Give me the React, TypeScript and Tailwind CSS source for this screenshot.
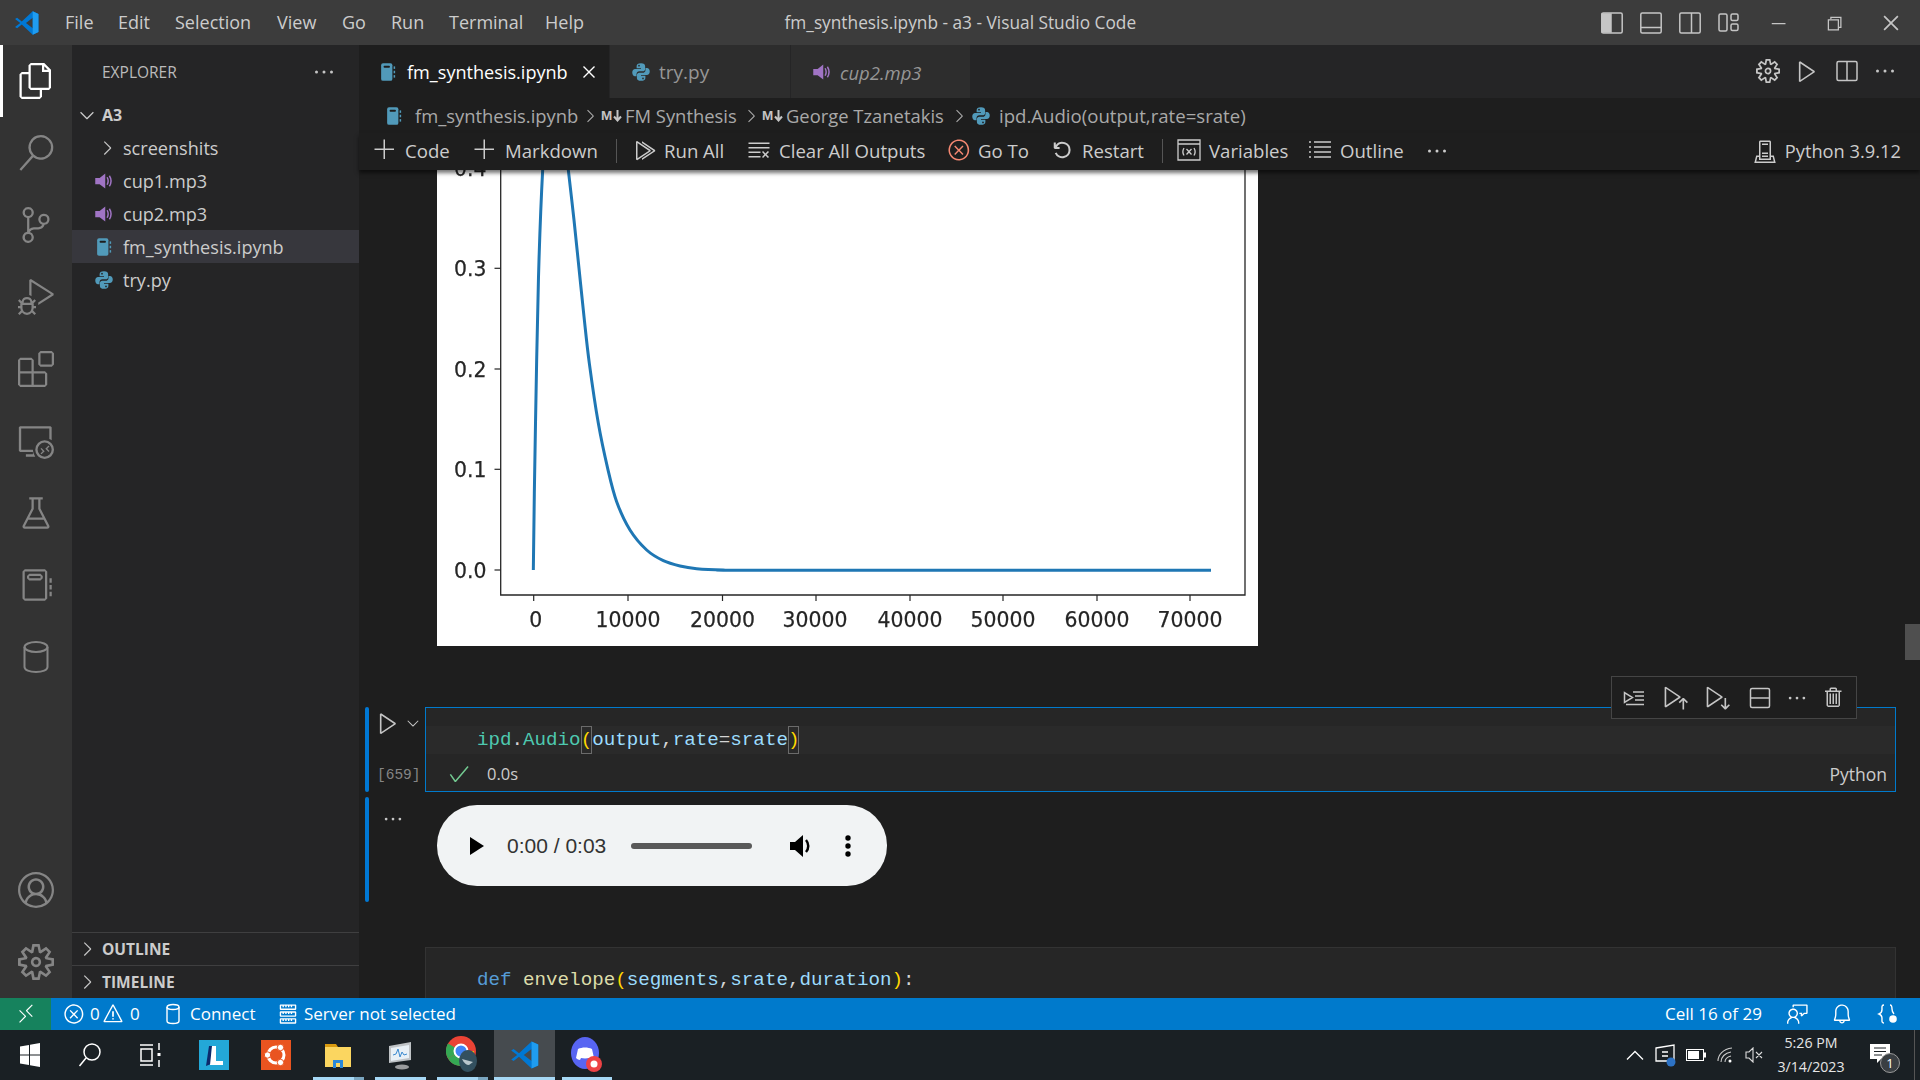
import React from "react";
import {
  VscFiles, VscSearch, VscSourceControl, VscDebugAlt, VscExtensions, VscRemoteExplorer, VscBeaker, VscNotebook,
  VscAccount, VscSettingsGear, VscChevronDown, VscChevronRight, VscClose, VscEllipsis, VscAdd, VscRunAll, VscClearAll,
  VscError, VscDebugRestart, VscPlay, VscCheck, VscRunAbove, VscRunBelow, VscTrash, VscWarning,
  VscRemote, VscFeedback, VscBell, VscServer, VscServerEnvironment, VscChromeMinimize, VscChromeRestore, VscChromeClose,
} from "react-icons/vsc";

const NotebookFile = ({ s = 20 }: { s?: number }) => (
  <svg width={s} height={s} viewBox="0 0 16 16" fill="#519aba" className="shrink-0">
    <rect x="2.5" y="1" width="9" height="14" rx="1.5" />
    <rect x="4.5" y="3" width="5" height="1.6" rx=".6" fill="#1e1e1e" />
    <rect x="12.5" y="3.5" width="1.2" height="2" />
    <rect x="12.5" y="7" width="1.2" height="2" />
    <rect x="12.5" y="10.5" width="1.2" height="2" />
  </svg>
);
const PyFile = ({ s = 20, c = "#519aba" }: { s?: number; c?: string }) => (
  <svg width={s} height={s} viewBox="0 0 16 16" fill={c} className="shrink-0">
    <path d="M8 1c-2.5 0-3.5 1-3.5 2.3V5H8v.6H3.3C2 5.6 1 6.7 1 8.4c0 1.8 1 2.9 2.2 2.9h1.2V9.700c0-1.300 1-2.300 2.300-2.300h2.700c1 0 1.900-.9 1.900-1.900V3.300C11.300 2 10.300 1 8 1zM6.400 2.200a.7.7 0 1 1 0 1.400.7.7 0 0 1 0-1.400z" />
    <path d="M8 15c2.500 0 3.500-1 3.500-2.300V11H8v-.6h4.700c1.300 0 2.300-1.100 2.300-2.800 0-1.800-1-2.900-2.200-2.900h-1.200v1.600c0 1.300-1 2.300-2.300 2.300H6.600c-1 0-1.900.9-1.900 1.900v2.200C4.700 14 5.700 15 8 15zm1.600-1.200a.7.7 0 1 1 0-1.400.7.7 0 0 1 0 1.400z" />
  </svg>
);
const AudioFile = ({ s = 20 }: { s?: number }) => (
  <svg width={s} height={s} viewBox="0 0 16 16" fill="#a074c4" className="shrink-0">
    <path d="M1 5.500h3.500L9 2v12L4.500 10.500H1z" />
    <path d="M10.500 5c1 1.800 1 4.200 0 6M12.300 3.800c1.600 2.500 1.600 5.900 0 8.400" fill="none" stroke="#a074c4" strokeWidth="1.200" />
  </svg>
);
const LayoutIcon = ({ kind }: { kind: "left" | "bottom" | "right" | "grid" }) => (
  <svg width="22" height="22" viewBox="0 0 22 22" fill="none" stroke="#c5c5c5" strokeWidth="1.500">
    {kind === "grid" ? (
      <>
        <rect x="1" y="2" width="8" height="17" rx="1.500" />
        <rect x="13" y="2" width="7" height="6.500" rx="1.500" />
        <rect x="13" y="12" width="7" height="6.500" rx="1.500" />
      </>
    ) : (
      <>
        <rect x=".8" y="1" width="20.400" height="20" rx="1.500" />
        {kind === "left" && <path d="M1 2h9v18H1z" fill="#c5c5c5" />}
        {kind === "bottom" && <path d="M1 15.500h20" />}
        {kind === "right" && <path d="M12.500 1v20" />}
      </>
    )}
  </svg>
);
const MD = () => (
  <span className="flex items-center w-[24px] shrink-0">
    <span className="text-[13.500px] font-bold text-[#c5c5c5] font-['Liberation_Sans',sans-serif] leading-none">M</span>
    <svg width="9" height="12" viewBox="0 0 9 12" fill="none" stroke="#c5c5c5" strokeWidth="2" className="ml-[1px] shrink-0">
      <path d="M4.500 0v10M1 6.500l3.500 4 3.500-4" />
    </svg>
  </span>
);

function smooth(p: [number, number][]) {
  let d = `M${p[0][0]} ${p[0][1]}`;
  for (let i = 0; i < p.length - 1; i++) {
    const a = p[Math.max(0, i - 1)], b = p[i], c = p[i + 1], e = p[Math.min(p.length - 1, i + 2)];
    const c1x = b[0] + (c[0] - a[0]) / 6, c1y = b[1] + (c[1] - a[1]) / 6;
    const c2x = c[0] - (e[0] - b[0]) / 6, c2y = c[1] - (e[1] - b[1]) / 6;
    d += `C${c1x} ${c1y} ${c2x} ${c2y} ${c[0]} ${c[1]}`;
  }
  return d;
}

function Chart() {
  const asc: [number, number][] = [[310, 1230], [313, 1000], [320, 600], [327, 300], [338, 30], [346, -60]];
  const desc: [number, number][] = [
    [405, -60], [415, 30], [432, 180], [447, 325], [462, 470], [478, 610], [505, 790], [533, 925], [560, 1025], [600, 1110], [650, 1170], [700, 1202],
    [750, 1218], [800, 1226], [880, 1230], [1000, 1231], [2343, 1231],
  ];
  const conv = (p: [number, number][]) => p.map(([x, y]) => [x / 3 - 7, y / 3 - 10] as [number, number]);
  const yt: [string, number][] = [["0.0", 400], ["0.1", 299.3], ["0.2", 199], ["0.3", 98.3], ["0.4", -2]];
  const xt: [string, number][] = [["0", 96.7], ["10000", 191], ["20000", 285.5], ["30000", 379], ["40000", 473], ["50000", 566], ["60000", 660], ["70000", 753]];
  return (
    <svg width="821" height="476" viewBox="0 0 821 476" className="block bg-white blur-[0.35px] shrink-0">
      <g fontFamily="'DejaVu Sans', sans-serif" fontSize="20.400" fill="#262626" stroke="#262626" strokeWidth="0.25">
        {yt.map(([t, y]) => (
          <g key={t}>
            <path d={`M57.500 ${y}H63.700`} strokeWidth="1.200" />
            <text x="17" y={y + 8}>{t}</text>
          </g>
        ))}
        {xt.map(([t, x]) => (
          <g key={t}>
            <path d={`M${x} 425V431`} strokeWidth="1.200" />
            <text x={t === "0" ? x + 2 : t === "30000" ? x - 1 : x} y="456.500" textAnchor="middle">{t}</text>
          </g>
        ))}
      </g>
      <path d="M63.700 -10V425H808V-10" fill="none" stroke="#262626" strokeWidth="1.300" />
      <path d={smooth(conv(asc))} fill="none" stroke="#1f77b4" strokeWidth="3" />
      <path d={smooth(conv(desc))} fill="none" stroke="#1f77b4" strokeWidth="3" />
    </svg>
  );
}

const Menu = ({ t, w }: { t: string; w: string }) => <span className={`${w} text-[#cccccc]`}>{t}</span>;

function TitleBar() {
  return (
    <div className="h-[45px] shrink-0 bg-[#3c3c3c] grid grid-cols-[1fr_auto_1fr] items-center text-[18px]">
      <div className="flex items-center">
        <svg width="26" height="26" viewBox="0 0 100 100" className="ml-[14px] mr-[25px] shrink-0">
          <path d="M72 5 30 44 12 30 4 35l20 15L4 65l8 5 18-14 42 39 22-10V15zM72 30v40L46 50z" fill="#0078d4" />
          <path d="M72 5l22 10v70L72 95z" fill="#1f9cf0" />
        </svg>
        <Menu t="File" w="w-[53px]" />
        <Menu t="Edit" w="w-[57px]" />
        <Menu t="Selection" w="w-[102px]" />
        <Menu t="View" w="w-[65px]" />
        <Menu t="Go" w="w-[49px]" />
        <Menu t="Run" w="w-[58px]" />
        <Menu t="Terminal" w="w-[96px]" />
        <Menu t="Help" w="w-[40px]" />
      </div>
      <div className="text-[#cccccc] text-[17.300px] w-[351px] text-center whitespace-nowrap">fm_synthesis.ipynb - a3 - Visual Studio Code</div>
      <div className="flex items-center justify-end">
        <div className="flex items-center gap-[17px] mr-[10px]">
          <LayoutIcon kind="left" />
          <LayoutIcon kind="bottom" />
          <LayoutIcon kind="right" />
          <LayoutIcon kind="grid" />
        </div>
        <div className="flex items-center text-[#c5c5c5]">
          <div className="w-[56px] flex justify-center"><VscChromeMinimize size={20} /></div>
          <div className="w-[56px] flex justify-center"><VscChromeRestore size={20} /></div>
          <div className="w-[58px] flex justify-center"><VscChromeClose size={22} /></div>
        </div>
      </div>
    </div>
  );
}

function ActivityBar() {
  const top = [VscSearch, VscSourceControl, VscDebugAlt, VscExtensions, VscRemoteExplorer, VscBeaker, VscNotebook];
  return (
    <div className="w-[72px] shrink-0 bg-[#333333] flex flex-col text-[#858585]">
      <div className="relative h-[72px] flex items-center justify-center text-white">
        <div className="absolute left-0 top-0 bottom-0 w-[3px] bg-white" />
        <VscFiles size={36} />
      </div>
      {top.map((I, i) => (
        <div key={i} className="h-[72px] flex items-center justify-center"><I size={36} /></div>
      ))}
      <div className="h-[72px] flex items-center justify-center">
        <svg width="36" height="36" viewBox="0 0 36 36" fill="none" stroke="#858585" strokeWidth="2">
          <ellipse cx="18" cy="8" rx="11.500" ry="5" />
          <path d="M6.500 8v20c0 3 5 5 11.500 5s11.500-2 11.500-5V8" />
        </svg>
      </div>
      <div className="mt-auto h-[72px] flex items-center justify-center"><VscAccount size={36} /></div>
      <div className="h-[72px] flex items-center justify-center"><VscSettingsGear size={36} /></div>
    </div>
  );
}

const Row = ({ icon, t, active }: { icon: React.ReactNode; t: string; active?: boolean }) => (
  <div className={`h-[33px] flex items-center text-[#cccccc] text-[18.100px] ${active ? "bg-[#37373d]" : ""}`}>
    <div className="w-[51px] flex justify-end pr-[9px]">{icon}</div>
    <span className="pt-[2px]">{t}</span>
  </div>
);

function Sidebar() {
  return (
    <div className="w-[287px] shrink-0 bg-[#252526] flex flex-col">
      <div className="h-[53px] flex items-center justify-between pl-[30px] pr-[23px] text-[#bbbbbb] text-[15.500px]">
        <span className="pt-[2px]">EXPLORER</span>
        <VscEllipsis size={24} className="text-[#c5c5c5]" />
      </div>
      <div className="h-[33px] flex items-center text-[#cccccc] font-bold text-[16px]">
        <VscChevronDown size={22} className="ml-[4px] mr-[4px]" />
        <span>A3</span>
      </div>
      <Row icon={<VscChevronRight size={22} className="text-[#c5c5c5] -mr-[4px]" />} t="screenshits" />
      <Row icon={<AudioFile />} t="cup1.mp3" />
      <Row icon={<AudioFile />} t="cup2.mp3" />
      <Row icon={<NotebookFile />} t="fm_synthesis.ipynb" active />
      <Row icon={<PyFile />} t="try.py" />
      <div className="mt-auto">
        {["OUTLINE", "TIMELINE"].map((t) => (
          <div key={t} className="h-[33px] border-t border-[#3f3f40] flex items-center text-[#cccccc] font-bold text-[15.500px]">
            <VscChevronRight size={22} className="ml-[4px] mr-[4px] text-[#c5c5c5]" />
            <span className="pt-[1px]">{t}</span>
          </div>
        ))}
      </div>
    </div>
  );
}

function Tabs() {
  return (
    <div className="h-[53px] shrink-0 bg-[#252526] flex items-stretch">
      <div className="w-[251px] bg-[#1e1e1e] flex items-center pl-[19px] text-white text-[18.100px] border-r border-[#252526]">
        <NotebookFile />
        <span className="ml-[9px] w-[171px] pt-[2px]">fm_synthesis.ipynb</span>
        <VscClose size={22} />
      </div>
      <div className="w-[181px] bg-[#2d2d2d] flex items-center pl-[21px] text-[#969696] text-[19px] border-r border-[#252526]">
        <PyFile />
        <span className="ml-[8px] pt-[2px]">try.py</span>
      </div>
      <div className="w-[179px] bg-[#2d2d2d] flex items-center pl-[21px] text-[#969696] text-[18.500px] italic">
        <AudioFile />
        <span className="ml-[8px] pt-[2px]">cup2.mp3</span>
      </div>
      <div className="flex-1 flex items-center justify-end pr-[23px] pb-[2px] text-[#c5c5c5]">
        <VscSettingsGear size={24} />
        <VscPlay size={26} className="ml-[14px]" />
        <svg width="22" height="22" viewBox="0 0 22 22" fill="none" stroke="#c5c5c5" strokeWidth="1.500" className="ml-[16px]">
          <rect x="1" y="1.500" width="20" height="19" rx="1.500" />
          <path d="M11 1.500v19" />
        </svg>
        <VscEllipsis size={24} className="ml-[15px]" />
      </div>
    </div>
  );
}

function Breadcrumb() {
  const chev = <VscChevronRight size={20} className="text-[#a9a9a9] mx-[1px] shrink-0" />;
  return (
    <div className="h-[35px] shrink-0 bg-[#1e1e1e] flex items-center pl-[25px] text-[#a9a9a9] text-[18.400px] whitespace-nowrap">
      <NotebookFile />
      <span className="ml-[11px] w-[164px]">fm_synthesis.ipynb</span>
      {chev}
      <MD />
      <span className="w-[115px]">FM Synthesis</span>
      {chev}
      <MD />
      <span className="w-[162px]">George Tzanetakis</span>
      {chev}
      <span className="ml-[1px]"><PyFile /></span>
      <span className="ml-[8px] text-[18.600px]">ipd.Audio(output,rate=srate)</span>
    </div>
  );
}

const Tool = ({ icon, t, w, ml, gap = "ml-[8px]" }: { icon: React.ReactNode; t: string; w: string; ml: string; gap?: string }) => (
  <div className={`flex items-center shrink-0 ${ml}`}>
    <div className="w-[24px] flex justify-center">{icon}</div>
    <span className={`${w} ${gap} whitespace-nowrap`}>{t}</span>
  </div>
);

function Toolbar() {
  return (
    <div className="h-[37px] shrink-0 bg-[#1e1e1e] flex items-center pl-[14px] pb-[2px] text-[#cccccc] text-[18.600px] shadow-[0_3px_4px_rgba(0,0,0,0.55)] relative z-10">
      <Tool ml="" w="w-[46px]" t="Code" icon={<VscAdd size={24} />} />
      <Tool ml="ml-[22px]" w="w-[92px]" t="Markdown" icon={<VscAdd size={24} />} />
      <div className="w-px h-[24px] bg-[#555] ml-[19px]" />
      <Tool ml="ml-[16px]" gap="ml-[7px]" w="w-[62px]" t="Run All" icon={<VscRunAll size={24} />} />
      <Tool ml="ml-[21px]" w="w-[148px]" t="Clear All Outputs" icon={<VscClearAll size={24} />} />
      <Tool ml="ml-[20px]" gap="ml-[7px]" w="w-[52px]" t="Go To" icon={<VscError size={24} className="text-[#f48771]" />} />
      <Tool ml="ml-[20px]" w="w-[62px]" t="Restart" icon={<VscDebugRestart size={22} />} />
      <div className="w-px h-[24px] bg-[#555] ml-[18px]" />
      <Tool ml="ml-[14px]" w="w-[78px]" t="Variables" icon={
        <svg width="24" height="24" viewBox="0 0 24 24" fill="none" stroke="#cccccc" strokeWidth="1.300">
          <path d="M1 2h22v20H1zM1 6h22" />
          <path d="M7 10c-1.500 2.500-1.500 5 0 7.500M17 10c1.500 2.500 1.500 5 0 7.500M9.500 11l5 5.500M14.500 11l-5 5.500" />
        </svg>
      } />
      <Tool ml="ml-[21px]" w="w-[66px]" t="Outline" icon={
        <svg width="24" height="22" viewBox="0 0 24 22" fill="none" stroke="#cccccc" strokeWidth="1.500">
          <path d="M6 3h17M6 8h17M6 13h17M6 18h17" />
          <path d="M1 3h2M1 8h2M1 13h2M1 18h2" />
        </svg>
      } />
      <VscEllipsis size={24} className="ml-[19px]" />
      <div className="ml-auto mr-[19px] flex items-center">
        <VscServerEnvironment size={24} />
        <span className="ml-[8px] text-[18.300px] whitespace-nowrap">Python 3.9.12</span>
      </div>
    </div>
  );
}

const C = ({ c, t }: { c: string; t: string }) => <span className={c}>{t}</span>;

function CellToolbar() {
  return (
    <div className="absolute right-[38px] -top-[32px] w-[246px] h-[43px] bg-[#1e1e1e] border border-[#454545] flex items-center text-[#c5c5c5] z-10">
      <svg width="24" height="24" viewBox="0 0 24 24" fill="none" stroke="#c5c5c5" strokeWidth="1.500" className="ml-[10px] shrink-0">
        <path d="M2.500 6.500v10l8-5zM11 6h11M13 10h9M13 14h9M4 18.500h18" />
      </svg>
      <VscRunAbove size={26} className="ml-[17px]" />
      <VscRunBelow size={26} className="ml-[16px]" />
      <svg width="22" height="22" viewBox="0 0 22 22" fill="none" stroke="#c5c5c5" strokeWidth="1.500" className="ml-[18px] shrink-0">
        <rect x="1.500" y="1.500" width="19" height="19" rx="1.500" />
        <path d="M1.500 11h19" />
      </svg>
      <VscEllipsis size={22} className="ml-[15px]" />
      <VscTrash size={24} className="ml-[14px]" />
    </div>
  );
}

function AudioPlayer() {
  return (
    <div className="w-[450px] h-[81px] rounded-[40px] bg-[#f1f3f4] flex items-center font-['Liberation_Sans',sans-serif]">
      <svg width="18" height="20" viewBox="0 0 18 20" className="ml-[31px] shrink-0"><path d="M2 1l14 9-14 9z" fill="#000" /></svg>
      <span className="ml-[21px] text-[21px] text-[#333] w-[124px] whitespace-nowrap leading-none">0:00 / 0:03</span>
      <div className="w-[121px] h-[6px] rounded-full bg-[#595959]" />
      <svg width="26" height="26" viewBox="0 0 26 26" className="ml-[37px] shrink-0">
        <path d="M1 9h5l8-7v22l-8-7H1z" fill="#000" />
        <path d="M17 7c3 3.500 3 8.500 0 12" fill="none" stroke="#000" strokeWidth="2.500" />
      </svg>
      <svg width="8" height="24" viewBox="0 0 8 24" className="ml-[29px] shrink-0">
        <circle cx="4" cy="4" r="2.700" /><circle cx="4" cy="12" r="2.700" /><circle cx="4" cy="20" r="2.700" />
      </svg>
    </div>
  );
}

function Notebook() {
  return (
    <div className="flex-1 min-h-0 overflow-hidden bg-[#1e1e1e] relative">
      <div className="ml-[78px]"><Chart /></div>
      <div className="mt-[61px] flex h-[85px]">
        <div className="ml-[6px] w-[4px] rounded-full bg-[#0078d4] shrink-0" />
        <div className="w-[56px] shrink-0 flex flex-col text-[#c5c5c5]">
          <div className="flex items-center mt-[3px] ml-[6px]">
            <VscPlay size={26} />
            <VscChevronDown size={18} className="ml-[3px]" />
          </div>
          <span className="mt-[32px] ml-[8px] text-[14.500px] leading-none text-[#858585] font-['Liberation_Mono',monospace] whitespace-nowrap">[659]</span>
        </div>
        <div className="flex-1 mr-[24px] relative border border-[#007acc] bg-[#262626] flex flex-col">
          <CellToolbar />
          <div className="mt-[18px] h-[28px] bg-[#2a2a2a] flex items-center pl-[51px] text-[19.200px] font-['Liberation_Mono',monospace] whitespace-pre">
            <C c="text-[#4ec9b0]" t="ipd" /><C c="text-[#d4d4d4]" t="." /><C c="text-[#4ec9b0]" t="Audio" />
            <span className="text-[#ffd700] outline outline-1 outline-[#6b6b6b] -outline-offset-1">(</span>
            <C c="text-[#9cdcfe]" t="output" /><C c="text-[#d4d4d4]" t="," /><C c="text-[#9cdcfe]" t="rate" /><C c="text-[#d4d4d4]" t="=" /><C c="text-[#9cdcfe]" t="srate" />
            <span className="text-[#ffd700] outline outline-1 outline-[#6b6b6b] -outline-offset-1">)</span>
          </div>
          <div className="flex-1 flex items-center text-[16.500px] text-[#cccccc] pr-[8px] pt-[3px]">
            <VscCheck size={24} className="text-[#73c991] ml-[21px]" />
            <span className="ml-[16px]">0.0s</span>
            <span className="ml-auto text-[17.500px]">Python</span>
          </div>
        </div>
      </div>
      <div className="mt-[5px] h-[105px] flex">
        <div className="ml-[6px] w-[4px] rounded-full bg-[#0078d4] shrink-0" />
        <div className="w-[19px] shrink-0 ml-[13px]">
          <VscEllipsis size={22} className="text-[#c5c5c5] mt-[11px]" />
        </div>
        <div className="mt-[8px] ml-[36px]"><AudioPlayer /></div>
      </div>
      <div className="mt-[45px] ml-[66px] mr-[24px] h-[60px] border border-[#333333] bg-[#262626] relative">
        <div className="mt-[19px] pl-[51px] text-[19.200px] leading-[26px] font-['Liberation_Mono',monospace] whitespace-pre">
          <C c="text-[#569cd6]" t="def " /><C c="text-[#dcdcaa]" t="envelope" /><C c="text-[#ffd700]" t="(" />
          <C c="text-[#9cdcfe]" t="segments" /><C c="text-[#d4d4d4]" t="," /><C c="text-[#9cdcfe]" t="srate" /><C c="text-[#d4d4d4]" t="," /><C c="text-[#9cdcfe]" t="duration" />
          <C c="text-[#ffd700]" t=")" /><C c="text-[#d4d4d4]" t=":" />
        </div>
      </div>
      <div className="absolute right-0 top-[454px] w-[15px] h-[36px] bg-[#4f4f4f]" />
    </div>
  );
}

function StatusBar() {
  return (
    <div className="h-[32px] shrink-0 bg-[#007acc] flex items-center text-white text-[17px] whitespace-nowrap">
      <div className="w-[51px] h-full bg-[#16825d] flex items-center justify-center"><VscRemote size={22} /></div>
      <VscError size={22} className="ml-[12px]" />
      <span className="ml-[5px] w-[14px]">0</span>
      <VscWarning size={22} className="-ml-[2px]" />
      <span className="ml-[6px] w-[25px]">0</span>
      <svg width="20" height="22" viewBox="0 0 20 22" fill="none" stroke="#fff" strokeWidth="1.400" className="ml-[8px]">
        <ellipse cx="10" cy="4" rx="6" ry="2.500" />
        <path d="M4 4v14c0 1.500 3 2.500 6 2.500s6-1 6-2.500V4" />
      </svg>
      <span className="ml-[7px] w-[74px]">Connect</span>
      <VscServer size={22} className="ml-[13px]" />
      <span className="ml-[5px]">Server not selected</span>
      <span className="ml-auto w-[98px] whitespace-nowrap">Cell 16 of 29</span>
      <VscFeedback size={22} className="ml-[24px]" />
      <VscBell size={22} className="ml-[22px]" />
      <svg width="22" height="22" viewBox="0 0 22 22" fill="none" stroke="#fff" strokeWidth="1.400" className="ml-[24px] mr-[21px]">
        <path d="M7 2C4.500 2 5 4 5 6.500 5 9 4.500 10 2 11c2.500 1 3 2 3 4.500S4.500 20 7 20M13 2c1.500 0 2 2 2 4s1 4 2 5" />
        <circle cx="16" cy="16" r="3.800" fill="#fff" stroke="none" />
      </svg>
    </div>
  );
}

const TaskApp = ({ children, w, ml = "", bar, stack, active }: { children: React.ReactNode; w: string; ml?: string; bar?: boolean; stack?: boolean; active?: boolean }) => (
  <div className={`relative h-full ${w} ${ml} flex items-center justify-center shrink-0 ${active ? "bg-[#464b4f]" : ""}`}>
    {children}
    {bar && <div className="absolute left-0 right-0 bottom-0 h-[3px] bg-[#a6d8f5]" />}
    {stack && <div className="absolute right-0 bottom-0 w-[10px] h-[3px] bg-[#7aa6c0]" />}
  </div>
);

function Taskbar() {
  return (
    <div className="h-[50px] shrink-0 bg-[#1a2024] flex items-center text-white">
      <div className="w-[60px] flex justify-center">
        <svg width="20" height="24" viewBox="0 0 20 24" fill="#fff"><path d="M0 3.500l9-1.500v9.500H0zM10 1.800L20 0v11.500H10zM0 12.500h9V22l-9-1.500zM10 12.500h10V24l-10-1.800z" /></svg>
      </div>
      <div className="w-[60px] flex justify-center">
        <svg width="24" height="26" viewBox="0 0 24 26" fill="none" stroke="#fff" strokeWidth="1.500"><circle cx="14" cy="10" r="8" /><path d="M8 16L1.500 24" /></svg>
      </div>
      <div className="w-[60px] flex justify-center">
        <svg width="22" height="26" viewBox="0 0 22 26" fill="none" stroke="#fff" strokeWidth="1.500">
          <path d="M1 3h13M1 23h13M2 7h11v12H2zM20 1v7M20 18v7" /><rect x="18.500" y="11" width="3" height="3" fill="#fff" stroke="none" />
        </svg>
      </div>
      <TaskApp w="w-[68px]">
        <svg width="30" height="30" viewBox="0 0 30 30"><rect width="30" height="30" fill="#23a8d8" /><path d="M7 26 10 6h3l-1 18z" fill="#0d2a6b" /><path d="M13 6h4v15h7v4H11z" fill="#fff" /></svg>
      </TaskApp>
      <TaskApp w="w-[56px]">
        <svg width="30" height="30" viewBox="0 0 30 30"><rect width="30" height="30" fill="#e95420" /><circle cx="15" cy="15" r="8" fill="none" stroke="#fff" strokeWidth="3" /><circle cx="6.500" cy="15" r="3.200" fill="#fff" stroke="#e95420" /><circle cx="19.500" cy="7.500" r="3.200" fill="#fff" stroke="#e95420" /><circle cx="19.500" cy="22.500" r="3.200" fill="#fff" stroke="#e95420" /></svg>
      </TaskApp>
      <TaskApp w="w-[51px]" ml="ml-[9px]" bar stack>
        <svg width="28" height="28" viewBox="0 0 28 28" className="-ml-[2px]"><path d="M1 3h11l2 3H1z" fill="#d89a10" /><rect x="1" y="6" width="26" height="20" fill="#fbd660" /><path d="M9 27V19h10v8h-3v-5h-4v5z" fill="#2a88d8" /></svg>
      </TaskApp>
      <TaskApp w="w-[51px]" ml="ml-[11px]" bar>
        <svg width="28" height="30" viewBox="0 0 28 30" className="-ml-[2px]"><path d="M3 6l22-4v18L3 23z" fill="#bfc3c6" /><path d="M5 8l18-3v13L5 21z" fill="#e8f0f6" /><path d="M7 15l3-1 2-5 2 8 2-5 2 3 3-1" fill="none" stroke="#3a8ad0" /><ellipse cx="16" cy="27" rx="7" ry="2.500" fill="#9a9c9e" /></svg>
      </TaskApp>
      <TaskApp w="w-[51px]" ml="ml-[11px]" bar stack>
        <svg width="34" height="40" viewBox="0 0 34 40">
          <circle cx="15" cy="16" r="15" fill="#ea4335" />
          <path d="M15 16L2 23.500A15 15 0 0 1 2 8.500z" fill="#34a853" />
          <path d="M2 23.500A15 15 0 0 0 21 29.700L28 16H15z" fill="#34a853" />
          <path d="M15 16h13a15 15 0 0 1-7 13.700z" fill="#fbbc05" />
          <circle cx="15" cy="16" r="6.500" fill="#4285f4" stroke="#fff" strokeWidth="2" />
          <ellipse cx="22" cy="26" rx="9" ry="11" fill="#33505f" />
          <path d="M16 24l11 3-4 3c-3 0-5-2-7-6z" fill="#b9c6cc" />
        </svg>
      </TaskApp>
      <TaskApp w="w-[61px]" ml="ml-[6px]" active bar>
        <svg width="30" height="30" viewBox="0 0 100 100">
          <path d="M72 5 30 44 12 30 4 35l20 15L4 65l8 5 18-14 42 39 22-10V15zM72 30v40L46 50z" fill="#0078d4" />
          <path d="M72 5l22 10v70L72 95z" fill="#1f9cf0" />
        </svg>
      </TaskApp>
      <TaskApp w="w-[50px]" ml="ml-[7px]" bar>
        <svg width="32" height="36" viewBox="0 0 32 36">
          <ellipse cx="14" cy="16" rx="14" ry="16" fill="#5865f2" />
          <path d="M7 12c4-2 10-2 14 0l2 9c-1 1-3 2-4 2l-1-2c-2 .5-6 .5-8 0l-1 2c-1 0-3-1-4-2z" fill="#fff" />
          <circle cx="23" cy="27" r="8" fill="#ed4245" />
          <circle cx="23" cy="27" r="3.500" fill="#fff" />
        </svg>
      </TaskApp>
      <div className="ml-auto flex items-center text-[#e6e6e6]">
        <svg width="18" height="12" viewBox="0 0 18 12" fill="none" stroke="#fff" strokeWidth="1.300"><path d="M1 10.500l8-8 8 8" /></svg>
        <svg width="22" height="24" viewBox="0 0 22 24" fill="none" stroke="#fff" strokeWidth="1.300" className="ml-[11px]">
          <path d="M1 5l18-3v16H1zM7 9h6M13 13H7" /><circle cx="16" cy="19" r="4.500" fill="#2d72c4" stroke="none" />
        </svg>
        <svg width="20" height="12" viewBox="0 0 20 12" className="ml-[9px]"><rect x=".5" y=".5" width="17" height="11" fill="none" stroke="#fff" /><rect x="2" y="2" width="11" height="8" fill="#fff" /><rect x="18" y="3.500" width="2" height="5" fill="#fff" /></svg>
        <svg width="16" height="16" viewBox="0 0 16 16" fill="none" stroke="#ccc" strokeWidth="1.100" className="ml-[11px]"><path d="M1 14C1 8 6 2 15 1M4 15C4 10 8 6 14 5M8 15c0-3 2-5 6-6" /><circle cx="13" cy="14" r="1.500" fill="#fff" stroke="none" /></svg>
        <svg width="18" height="16" viewBox="0 0 18 16" fill="none" stroke="#ddd" strokeWidth="1.100" className="ml-[12px]"><path d="M1 5h3l4-4v14l-4-4H1zM11 5l6 6M17 5l-6 6" /></svg>
        <div className="w-[82px] ml-[7px] flex flex-col items-center text-[14.200px] leading-[24px] text-[#e6e6e6]">
          <span>5:26 PM</span>
          <span>3/14/2023</span>
        </div>
        <div className="relative w-[34px] h-[34px] ml-[18px]">
          <svg width="22" height="20" viewBox="0 0 22 20" className="absolute left-[0px] top-[6px]"><path d="M0 0h20v15H11l-4 4v-4H0z" fill="#fff" /><path d="M4 4h12M4 7.500h12M4 11h8" stroke="#1a2024" /></svg>
          <div className="absolute left-[10px] top-[15px] w-[20px] h-[20px] rounded-full bg-[#3a3f43] border border-[#999] text-[13px] leading-[18px] text-center text-white">1</div>
        </div>
        <div className="w-px h-[50px] bg-[#555] ml-[10px] mr-[5px]" />
      </div>
    </div>
  );
}

export default function App() {
  return (
    <div className="w-[1920px] h-[1080px] flex flex-col overflow-hidden font-['Open_Sans',sans-serif] bg-[#1e1e1e]">
      <TitleBar />
      <div className="flex-1 min-h-0 flex">
        <ActivityBar />
        <Sidebar />
        <div className="flex-1 min-w-0 flex flex-col">
          <Tabs />
          <Breadcrumb />
          <Toolbar />
          <Notebook />
        </div>
      </div>
      <StatusBar />
      <Taskbar />
    </div>
  );
}
